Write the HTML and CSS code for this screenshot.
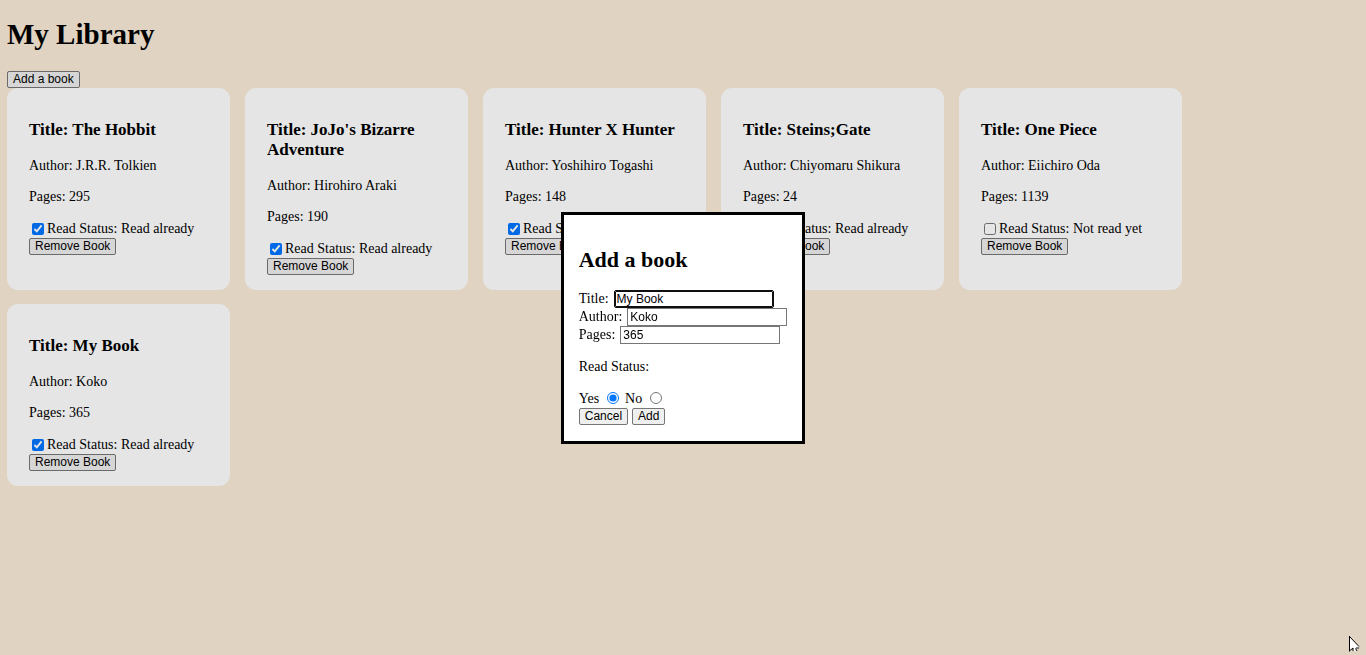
FILE: index.html
```html
<!DOCTYPE html>
<html lang="en">
<head>
  <meta charset="utf-8">
  <meta name="viewport" content="width=device-width, initial-scale=1">
  <title>My Library</title>
  <link rel="stylesheet" href="styles.css">
</head>
<body>
  <h1 class="page-title">My Library</h1>
  <button class="btn" id="open-form" type="button">Add a book</button>

  <main class="library">
    <article class="card">
      <h3 class="card-title">Title: The Hobbit</h3>
      <p class="text">Author: J.R.R. Tolkien</p>
      <p class="text">Pages: 295</p>
      <label class="status"><input class="tick" type="checkbox" checked>Read Status: Read already</label>
      <button class="btn" type="button">Remove Book</button>
    </article>
    <article class="card">
      <h3 class="card-title">Title: JoJo's Bizarre Adventure</h3>
      <p class="text">Author: Hirohiro Araki</p>
      <p class="text">Pages: 190</p>
      <label class="status"><input class="tick" type="checkbox" checked>Read Status: Read already</label>
      <button class="btn" type="button">Remove Book</button>
    </article>
    <article class="card">
      <h3 class="card-title">Title: Hunter X Hunter</h3>
      <p class="text">Author: Yoshihiro Togashi</p>
      <p class="text">Pages: 148</p>
      <label class="status"><input class="tick" type="checkbox" checked>Read Status: Read already</label>
      <button class="btn" type="button">Remove Book</button>
    </article>
    <article class="card">
      <h3 class="card-title">Title: Steins;Gate</h3>
      <p class="text">Author: Chiyomaru Shikura</p>
      <p class="text">Pages: 24</p>
      <label class="status"><input class="tick" type="checkbox" checked>Read Status: Read already</label>
      <button class="btn" type="button">Remove Book</button>
    </article>
    <article class="card">
      <h3 class="card-title">Title: One Piece</h3>
      <p class="text">Author: Eiichiro Oda</p>
      <p class="text">Pages: 1139</p>
      <label class="status"><input class="tick" type="checkbox">Read Status: Not read yet</label>
      <button class="btn" type="button">Remove Book</button>
    </article>
    <article class="card">
      <h3 class="card-title">Title: My Book</h3>
      <p class="text">Author: Koko</p>
      <p class="text">Pages: 365</p>
      <label class="status"><input class="tick" type="checkbox" checked>Read Status: Read already</label>
      <button class="btn" type="button">Remove Book</button>
    </article>
  </main>

  <dialog class="dialog" id="book-dialog" aria-labelledby="dialog-title">
    <form method="dialog">
      <h2 class="dialog-title" id="dialog-title">Add a book</h2>
      <div class="field">
        <label for="title">Title:</label>
        <input class="box" id="title" type="text" value="My Book" autofocus>
      </div>
      <div class="field">
        <label for="author">Author:</label>
        <input class="box" id="author" type="text" value="Koko">
      </div>
      <div class="field">
        <label for="pages">Pages:</label>
        <input class="box" id="pages" type="text" value="365">
      </div>
      <p class="text" id="read-legend">Read Status:</p>
      <div class="choices" role="radiogroup" aria-labelledby="read-legend">
        <label for="yes">Yes</label>
        <input class="radio" id="yes" type="radio" name="read" checked>
        <label for="no">No</label>
        <input class="radio" id="no" type="radio" name="read">
      </div>
      <div class="actions">
        <button class="btn" type="submit" value="cancel">Cancel</button>
        <button class="btn" type="submit" value="add">Add</button>
      </div>
    </form>
    <svg class="pointer" width="12" height="19" viewBox="0 0 12 19" aria-hidden="true">
      <path d="M.5 .5V15H1.5L4 12.5L5.2 15H8.2L7.2 12.5H9.8V10Z" fill="#fff"/>
      <path d="M.5 0V15.5M.5 .5L10 10.5M1 14.5L4 12V15M6.5 12.5L8 15M7 12H10" fill="none" stroke="#000"/>
    </svg>
  </dialog>
  <script src="script.js"></script>
</body>
</html>
```

FILE: styles.css
```css
body {
  margin: 18px 7px 7px;
  background: antiquewhite;
  color: #000;
  font: 14px/17px "Liberation Serif", "Times New Roman", serif;
}

.page-title {
  margin: 0 0 20px;
  font-size: 29px;
  line-height: 33px;
}

.btn {
  display: block;
  box-sizing: border-box;
  padding: 0 5px;
  border: 1px solid #767676;
  border-radius: 2px;
  background: #efefef;
  color: #000;
  font: 12px/15px "Liberation Sans", Arial, sans-serif;
}

.library {
  display: grid;
  grid-template-columns: repeat(auto-fill, 223px);
  gap: 14px 15px;
}

.card {
  padding: 14px 22px 15px;
  border-radius: 11px;
  background: #fff;
}

.card-title {
  margin: 18px 0 17px;
  font-size: 17px;
  line-height: 20px;
}

.text {
  margin: 14px 0;
}

.status {
  display: flex;
  align-items: center;
  height: 19px;
}

.tick {
  width: 12px;
  height: 12px;
  margin: 0 3px;
}

.dialog {
  padding: 15px 15px 16px;
  border: 3px solid #000;
  background: #fff;
  color: #000;
}

.dialog::backdrop {
  background: rgb(0 0 0 / 10%);
}

.dialog-title {
  margin: 17px 0 18px;
  font-size: 22px;
  line-height: 25px;
}

.field {
  display: flex;
  align-items: center;
  gap: 5px;
  height: 18px;
}

.box {
  box-sizing: border-box;
  width: 160px;
  height: 18px;
  padding: 1px 2px;
  border: 1px solid #767676;
  background: #fff;
  color: #000;
  font: 12px "Liberation Sans", Arial, sans-serif;
}

.box:focus {
  outline: 1px solid #101010;
  outline-offset: -2px;
  border-color: #101010;
  border-radius: 2px;
}

.choices {
  display: flex;
  align-items: center;
  height: 19px;
}

.radio {
  width: 12px;
  height: 12px;
  margin: 0 6px 0 8px;
}

.actions {
  display: flex;
  gap: 4px;
}

.pointer {
  position: fixed;
  right: 5px;
  bottom: 0;
}
```

FILE: script.js
```js
const dialog = document.getElementById("book-dialog");
const titleBox = document.getElementById("title");

function openDialog() {
  dialog.showModal();
  titleBox.focus();
  titleBox.setSelectionRange(titleBox.value.length, titleBox.value.length);
}

document.getElementById("open-form").addEventListener("click", openDialog);
openDialog();
```
